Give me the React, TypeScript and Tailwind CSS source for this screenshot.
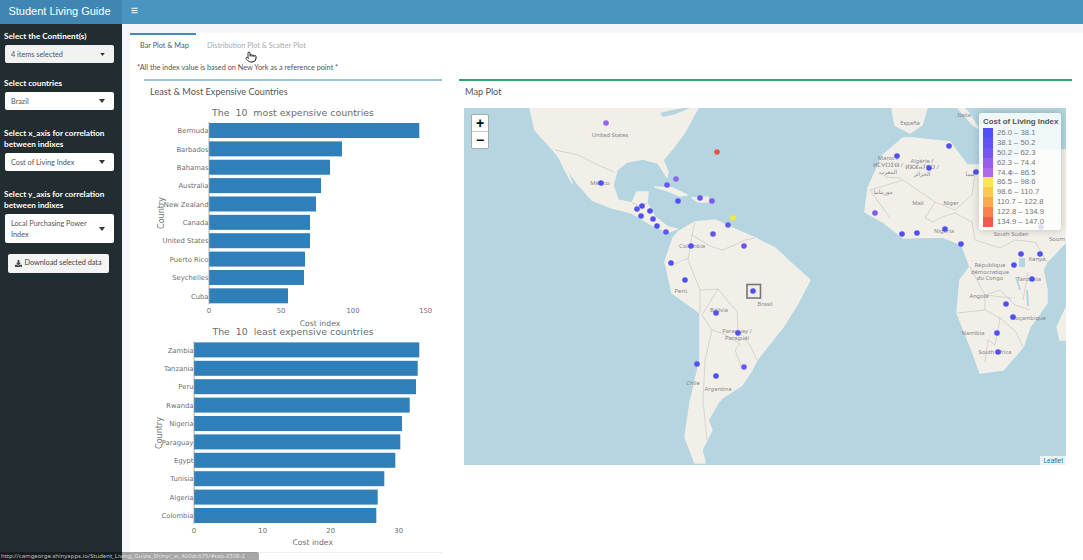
import { FaBars, FaDownload } from "react-icons/fa";
import { Pointer } from "lucide-react";

const mostExpensive: [string, number][] = [
  ["Bermuda", 419.3],
  ["Barbados", 342],
  ["Bahamas", 330],
  ["Australia", 321],
  ["New Zealand", 316],
  ["Canada", 310],
  ["United States", 310],
  ["Puerto Rico", 305],
  ["Seychelles", 304],
  ["Cuba", 288],
];

const leastExpensive: [string, number][] = [
  ["Zambia", 419.3],
  ["Tanzania", 417.7],
  ["Peru", 416],
  ["Rwanda", 409.7],
  ["Nigeria", 402],
  ["Paraguay", 400.3],
  ["Egypt", 395.3],
  ["Tunisia", 384.3],
  ["Algeria", 377.7],
  ["Colombia", 376.3],
];

const BLUE = "#5050f5";

// map markers, in page pixels
const markers: [number, number, string][] = [
  [606, 123, "#9a62e8"],
  [717, 152, "#ea5442"],
  [676, 179, "#9462ea"],
  [667, 185, "#6a58ee"],
  [601, 183, BLUE],
  [700, 198, "#6156f0"],
  [712, 201, "#7c5aea"],
  [678, 201, BLUE],
  [733, 218, "#f6e640"],
  [728, 225, "#6156f0"],
  [713, 234, "#6156f0"],
  [744, 246, "#6a58ee"],
  [691, 246, BLUE],
  [671, 263, BLUE],
  [666, 232, "#6156f0"],
  [657, 226, BLUE],
  [653, 219, BLUE],
  [650, 211, BLUE],
  [642, 206, BLUE],
  [637, 209, BLUE],
  [641, 216, BLUE],
  [685, 280, BLUE],
  [753, 291, BLUE],
  [716, 313, BLUE],
  [738, 333, BLUE],
  [697, 364, BLUE],
  [716, 376, BLUE],
  [744, 367, "#6a58ee"],
  [897, 156, BLUE],
  [949, 146, BLUE],
  [929, 168, BLUE],
  [976, 172, BLUE],
  [875, 213, "#7c5aea"],
  [902, 234, BLUE],
  [917, 233, BLUE],
  [945, 229, BLUE],
  [961, 244, BLUE],
  [1021, 254, BLUE],
  [1040, 254, BLUE],
  [1014, 265, BLUE],
  [1032, 279, BLUE],
  [1006, 304, BLUE],
  [1013, 317, BLUE],
  [997, 333, BLUE],
  [998, 352, BLUE],
  [1011, 173, BLUE],
  [1041, 227, BLUE],
];

const mapLabels: [string, number, number][] = [
  ["United States", 610, 137],
  ["México", 600, 185],
  ["Colombia", 692, 248],
  ["Perú", 681, 293],
  ["Brasil", 765, 306],
  ["Bolivia", 719, 312],
  ["Paraguay /", 737, 333],
  ["Paraguái", 737, 340],
  ["Chile", 693, 385],
  ["Argentina", 718, 391],
  ["España", 910, 125],
  ["Italia", 964, 117],
  ["Maroc /", 888, 160],
  ["ⵍⵎⵖⵔⵉⴱ /", 888, 167],
  ["المغرب", 888, 174],
  ["Algérie /", 922, 163],
  ["ⵍⵣⵣⴰⵢⴻⵔ /", 922, 169],
  ["الجزائر", 922, 176],
  ["موريتانيا", 883, 194],
  ["ليبيا", 970, 176],
  ["Mali", 918, 205],
  ["Niger", 951, 205],
  ["Nigeria", 944, 233],
  ["South Sudan", 1011, 236],
  ["Soom", 1057, 241],
  ["Kenya", 1037, 261],
  ["République", 990, 267],
  ["démocratique", 990, 274],
  ["du Congo", 990, 280],
  ["Tanzania", 1029, 281],
  ["Angola", 979, 298],
  ["Moçambique", 1028, 320],
  ["Namibia", 973, 335],
  ["South Africa", 995, 354],
];

const land = [
  "530,108 535,130 553,150 565,165 577,183 592,200 612,208 632,213 652,225 668,232 677,229 668,227 655,217 647,203 648,192 637,192 632,203 618,200 613,185 617,170 627,162 643,159 658,163 667,177 668,172 663,160 673,148 685,132 698,108",
  "673,238 678,232 695,222 715,220 732,228 755,238 775,248 790,262 810,280 798,303 783,327 775,337 757,360 752,370 742,385 722,398 718,403 708,420 712,430 702,450 705,463 695,463 685,437 690,403 700,360 700,313 672,293 667,270 665,262",
  "903,138 883,155 868,188 865,212 883,222 903,238 943,237 962,245 970,267 960,280 957,313 973,353 980,373 1003,370 1023,347 1030,327 1047,303 1047,290 1043,270 1047,262 1066,242 1066,150 1030,150 1000,165 967,165 950,142 913,138",
  "892,108 895,125 910,133 922,125 927,108",
  "958,108 973,125 978,128 968,112 964,108",
  "1066,308 1057,327 1060,340 1066,340",
  // Baja California, Cuba, Hispaniola, Jamaica
  "558,155 565,170 572,183 568,172 561,158",
  "655,187 672,188 687,195 680,196 668,191",
  "692,198 708,197 708,202 698,202",
];

const lakes = [
  "660,113 672,110 684,108 690,108 676,114 663,117",
  "1019,258 1025,258 1025,267 1019,267",
  "1015,277 1017,277 1021,290 1019,290",
  "1026,290 1028,290 1029,306 1027,306",
];

const borders = [
  "555,150 578,155 598,165 614,172",
  "632,203 640,206 647,203",
  "695,222 692,235 710,246 722,250 735,245 745,240 755,238",
  "692,235 688,260 700,290 700,313",
  "700,290 718,289 737,312 738,330 750,345 757,360",
  "718,289 702,315 712,330 724,334 740,344 735,350 741,366",
  "712,330 705,360 703,400 707,440",
  "672,265 688,258",
  "903,180 870,190 890,218",
  "885,177 900,178 935,202 955,210 972,195 975,172",
  "935,202 925,218 933,222 942,217 955,213 972,222 975,240",
  "975,240 1000,248 1015,240 1035,242 1047,262",
  "957,313 985,310 1000,318 995,345 988,340",
  "970,267 985,295 1000,290 1015,305 1030,310",
  "985,310 985,295 1012,298",
  "1023,300 1028,272",
  "1000,318 1016,332 1023,347",
  "988,340 985,362",
];

const legend: [string, string][] = [
  ["26.0 – 38.1", "#5050f6"],
  ["38.1 – 50.2", "#6253f4"],
  ["50.2 – 62.3", "#7656f0"],
  ["62.3 – 74.4", "#955fec"],
  ["74.4 – 86.5", "#ae68e8"],
  ["86.5 – 98.6", "#f8e84e"],
  ["98.6 – 110.7", "#fbc94e"],
  ["110.7 – 122.8", "#fba84e"],
  ["122.8 – 134.9", "#f9824c"],
  ["134.9 – 147.0", "#f05a4a"],
];

function BarChart({
  top,
  height,
  axisX,
  firstBar,
  pitch,
  rows,
  title,
  titleY,
  ticks,
  tickY,
  xLabelX,
  xLabelY,
  yLabelX,
  yLabelY,
}: {
  top: number;
  height: number;
  axisX: number;
  firstBar: number;
  pitch: number;
  rows: [string, number][];
  title: string;
  titleY: number;
  ticks: [string, number][];
  tickY: number;
  xLabelX: number;
  xLabelY: number;
  yLabelX: number;
  yLabelY: number;
}) {
  return (
    <svg
      viewBox={`144 ${top} 298 ${height}`}
      width={298}
      height={height}
      className="block overflow-visible font-['DejaVu_Sans',sans-serif]"
    >
      <text x={293} y={titleY} textAnchor="middle" fontSize={9.4} fill="#6b6b6b" xmlSpace="preserve">
        {title}
      </text>
      {rows.map(([name, end], i) => (
        <g key={name}>
          <rect x={axisX} y={firstBar + i * pitch} width={end - axisX} height={15} fill="#2f7fb9" />
          <text
            x={axisX - 0.5}
            y={firstBar + i * pitch + 10.2}
            textAnchor="end"
            fontSize={6.8}
            fill="#6e6e6e"
          >
            {name}
          </text>
        </g>
      ))}
      <line
        x1={axisX}
        x2={axisX}
        y1={firstBar - 1}
        y2={firstBar + 9 * pitch + 16}
        stroke="#9a9a9a"
        strokeWidth={0.8}
      />
      {ticks.map(([label, x]) => (
        <text key={label} x={x} y={tickY} textAnchor="middle" fontSize={6.8} fill="#6e6e6e">
          {label}
        </text>
      ))}
      <text x={xLabelX} y={xLabelY} textAnchor="middle" fontSize={7.7} fill="#6e6e6e">
        Cost index
      </text>
      <text
        x={yLabelX}
        y={yLabelY}
        textAnchor="middle"
        fontSize={8}
        fill="#6e6e6e"
        transform={`rotate(-90 ${yLabelX} ${yLabelY})`}
      >
        Country
      </text>
    </svg>
  );
}

function WorldMap() {
  return (
    <svg viewBox="464 108 602 357" width={602} height={357} className="block font-['Noto_Sans','DejaVu_Sans',sans-serif]">
      <rect x={464} y={108} width={602} height={357} fill="#b5d6e0" />
      {land.map((points) => (
        <polygon
          key={points}
          points={points}
          fill="#f2efe9"
          stroke="#f2efe9"
          strokeWidth={1.5}
          strokeLinejoin="round"
        />
      ))}
      {lakes.map((points) => (
        <polygon key={points} points={points} fill="#b5d6e0" />
      ))}
      {borders.map((points) => (
        <polyline key={points} points={points} fill="none" stroke="#c4c0c0" strokeWidth={0.6} />
      ))}
      {mapLabels.map(([label, x, y]) => (
        <text key={label} x={x} y={y} textAnchor="middle" fontSize={5.8} fill="#85858c">
          {label}
        </text>
      ))}
      {markers.map(([x, y, color]) => (
        <circle key={`${x}-${y}`} cx={x} cy={y} r={2.8} fill={color} />
      ))}
      <rect x={747} y={284.5} width={13.5} height={13.5} fill="none" stroke="#777" strokeWidth={1.6} />
    </svg>
  );
}

function Caret({ small }: { small?: boolean }) {
  return (
    <svg width={small ? 5 : 6} height={small ? 3 : 4} viewBox="0 0 6 4" className="shrink-0">
      <polygon points="0,0 6,0 3,4" fill="#333" />
    </svg>
  );
}

function Filter({
  label,
  value,
  muted,
  className,
}: {
  label: string[];
  value: string[];
  muted?: boolean;
  className: string;
}) {
  return (
    <div className={className}>
      <div className="pl-1 text-[8.2px] leading-[11px] font-bold text-white">
        {label.map((line) => (
          <div key={line}>{line}</div>
        ))}
      </div>
      <div
        className={`mt-[3px] ml-[5px] flex w-[109px] items-center justify-between rounded-[2px] py-[3px] pr-[9px] pl-[6px] text-[7.3px] leading-[11px] text-[#555] ${
          muted ? "bg-[#f2f2f2]" : "bg-white"
        } ${value.length > 1 ? "min-h-[29px]" : "min-h-[18px]"}`}
      >
        <div>
          {value.map((line) => (
            <div key={line}>{line}</div>
          ))}
        </div>
        <Caret small={muted} />
      </div>
    </div>
  );
}

export default function App() {
  return (
    <div className="relative flex h-[560px] w-[1083px] flex-col overflow-hidden bg-white font-['Lato',sans-serif]">
      <header className="flex h-6 shrink-0 bg-[#4a94c2]">
        <div className="flex w-[122px] items-center justify-center bg-[#3f86b5] pr-[3px] pb-[2px] font-['Liberation_Sans',sans-serif] text-[11px] text-white">
          Student Living Guide
        </div>
        <div className="flex items-center pb-[4px] pl-[9px] text-white">
          <FaBars size={7} />
        </div>
      </header>

      <div className="flex min-h-0 flex-1">
        <aside className="w-[122px] shrink-0 bg-[#222d32] pt-[7px]">
          <Filter className="" label={["Select the Continent(s)"]} value={["4 items selected"]} muted />
          <Filter className="mt-[15px]" label={["Select countries"]} value={["Brazil"]} />
          <Filter
            className="mt-[18px]"
            label={["Select x_axis for correlation", "between indixes"]}
            value={["Cost of Living Index"]}
          />
          <Filter
            className="mt-[18px]"
            label={["Select y_axis for correlation", "between indixes"]}
            value={["Local Purchasing Power", "Index"]}
          />
          <button
            type="button"
            className="mt-[11px] ml-[8px] flex h-[19px] w-[101px] items-center justify-center gap-[2px] rounded-[2px] bg-[#f4f4f4] text-[7.3px] text-[#444]"
          >
            <FaDownload size={7} />
            Download selected data
          </button>
        </aside>

        <main className="min-w-0 flex-1 bg-[#f4f6f9] pt-[9px] pl-[8px]">
          <div className="h-full bg-white">
            <nav className="flex h-[24px] text-[7.3px] leading-[22px]">
              <div className="w-[66px] border-t-2 border-[#3c8dbc] pl-[10px] text-[#555]">Bar Plot &amp; Map</div>
              <div className="pt-[2px] pl-[11px] text-[#aaa]">Distribution Plot &amp; Scatter Plot</div>
            </nav>
            <p className="mt-[6px] pl-[7px] text-[7.3px] leading-[10px] text-[#555]">
              *All the index value is based on New York as a reference point *
            </p>
            <div className="mt-[6px] flex gap-[17px] pl-[14px]">
              <section className="h-[474px] w-[298px] shrink-0 border-t-2 border-b border-t-[#9cc0d8] border-b-[#eee]">
                <h2 className="pt-[4px] pl-[6px] text-[9.2px] leading-[13px] text-[#555]">
                  Least &amp; Most Expensive Countries
                </h2>
                <BarChart
                  top={98}
                  height={227}
                  axisX={209}
                  firstBar={123}
                  pitch={18.37}
                  rows={mostExpensive}
                  title="The  10  most expensive countries"
                  titleY={115.5}
                  ticks={[
                    ["0", 209],
                    ["50", 281],
                    ["100", 353],
                    ["150", 425.7],
                  ]}
                  tickY={312.5}
                  xLabelX={320}
                  xLabelY={326}
                  yLabelX={163.5}
                  yLabelY={213}
                />
                <BarChart
                  top={325}
                  height={227}
                  axisX={194}
                  firstBar={342.4}
                  pitch={18.4}
                  rows={leastExpensive}
                  title="The  10  least expensive countries"
                  titleY={334.5}
                  ticks={[
                    ["0", 194],
                    ["10", 262.7],
                    ["20", 330.7],
                    ["30", 398.7],
                  ]}
                  tickY={532.5}
                  xLabelX={312.7}
                  xLabelY={545}
                  yLabelX={161.5}
                  yLabelY={433}
                />
              </section>

              <section className="w-[613px] shrink-0 border-t-2 border-t-[#2fa36f]">
                <h2 className="pt-[4px] pl-[6px] text-[9.2px] leading-[13px] text-[#555]">Map Plot</h2>
                <div className="relative mt-[10px] ml-[5px] h-[357px] w-[602px]">
                  <WorldMap />
                  <div className="absolute top-[6px] left-[7px] flex w-[18px] flex-col rounded-[2px] border border-[#aaa] bg-white font-['Liberation_Sans',sans-serif] text-[14px] leading-[16px] font-bold text-black">
                    <span className="border-b border-[#ccc] text-center">+</span>
                    <span className="text-center">−</span>
                  </div>
                  <div className="absolute top-[5px] left-[515px] w-[82px] rounded-[3px] bg-white/80 py-[3px] pl-[4px] font-['Liberation_Sans',sans-serif] shadow-[0_0_8px_rgba(0,0,0,0.2)]">
                    <div className="text-[7.9px] leading-[11px] font-bold whitespace-nowrap text-[#555]">
                      Cost of Living Index
                    </div>
                    <div className="mt-[1px]">
                      {legend.map(([range, color]) => (
                        <div key={range} className="flex h-[9.9px] items-center gap-[4px]">
                          <span className="h-full w-[10px]" style={{ backgroundColor: color }} />
                          <span className="text-[7.7px] leading-[10px] text-[#777]">{range}</span>
                        </div>
                      ))}
                    </div>
                  </div>
                  <div className="absolute right-0 bottom-0 bg-white/70 px-[3px] font-['Liberation_Sans',sans-serif] text-[6.5px] leading-[9px] text-[#0078a8]">
                    Leaflet
                  </div>
                </div>
              </section>
            </div>
          </div>
        </main>
      </div>

      <Pointer
        size={12}
        fill="white"
        strokeWidth={1.6}
        className="absolute top-[51px] left-[245px] text-black"
      />
      <div className="absolute bottom-0 left-0 h-[8px] w-[259px] overflow-hidden rounded-tr-[2px] bg-black/35 pl-[1px] font-['Noto_Sans',sans-serif] text-[6px] leading-[8px] whitespace-nowrap text-white/70">
        http://camgeorge.shinyapps.io/Student_Living_Guide_Shiny/_w_4b0dc675/#tab-2508-2
      </div>
    </div>
  );
}
